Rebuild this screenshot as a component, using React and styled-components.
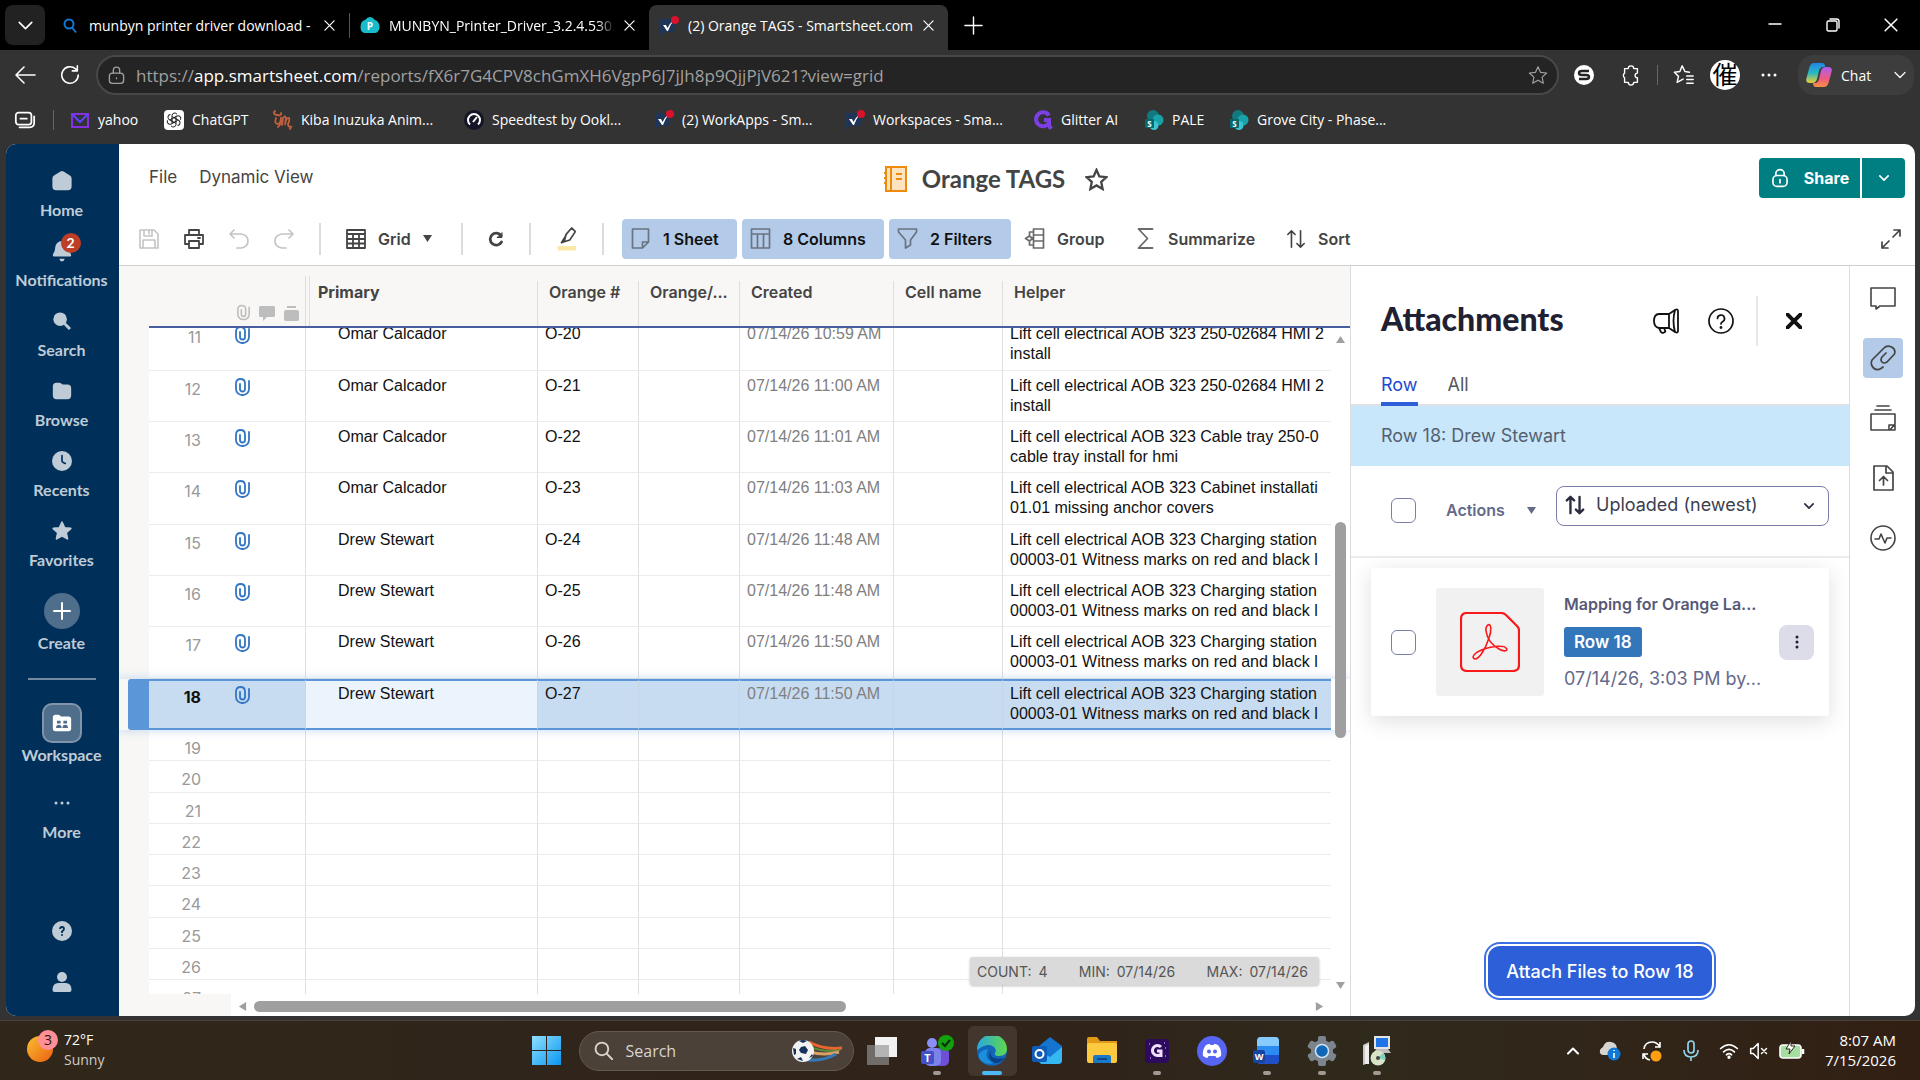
import { useLayoutEffect, useRef } from "react";
import styled, { createGlobalStyle, css } from "styled-components";

const GlobalStyle = createGlobalStyle`
  * {
    box-sizing: border-box;
  }
  body {
    margin: 0;
    background-color: #333333;
    font-family: Inter, "Liberation Sans", sans-serif;
  }
  button {
    border: none;
    padding: 0;
    background: none;
    color: inherit;
    font: inherit;
  }
  a {
    color: inherit;
    text-decoration: none;
  }
  svg {
    display: block;
    flex: none;
  }
`;

const Screen = styled.div`
  height: 100vh;
  display: flex;
  flex-direction: column;
  overflow: hidden;
`;

/* ---------- browser ---------- */

const Browser = styled.header`
  color: #ffffff;
  font-family: "Open Sans", "Noto Sans", sans-serif;
  font-size: 14px;
`;
const TabStrip = styled.div`
  height: 50px;
  padding: 5px 0 0 5px;
  display: flex;
  background-color: #000000;
`;
const TabSearch = styled.button`
  width: 40px;
  height: 40px;
  margin-right: 5px;
  border-radius: 8px;
  background-color: #222222;
  display: flex;
  align-items: center;
  justify-content: center;
`;
const Tab = styled.div`
  width: 299px;
  padding: 0 14px 4px 10px;
  display: flex;
  align-items: center;
  gap: 9px;
  border-radius: 8px 8px 0 0;
  background-color: ${(props) => (props.$active ? "#333333" : "transparent")};
`;
const TabTitle = styled.span`
  flex: 1;
  overflow: hidden;
  white-space: nowrap;
  mask-image: ${(props) => (props.$fade ? "linear-gradient(90deg, #000 92%, transparent)" : "none")};
`;
const TabLine = styled.div`
  width: 1px;
  height: 25px;
  margin-top: 8px;
  background-color: #555555;
`;
const NewTab = styled.button`
  width: 50px;
  height: 40px;
  display: flex;
  align-items: center;
  justify-content: center;
`;
const WindowButtons = styled.div`
  margin-left: auto;
  height: 40px;
  display: flex;

  button {
    width: 58px;
    display: flex;
    align-items: center;
    justify-content: center;
  }
`;
const AddressRow = styled.div`
  height: 50px;
  padding: 0 6px 0 13px;
  display: flex;
  align-items: center;
  gap: 15px;
`;
const AddressBox = styled.div`
  flex: 1;
  height: 40px;
  padding: 0 9px;
  display: flex;
  align-items: center;
  gap: 10px;
  border: 2px solid #484848;
  border-radius: 20px;
  background-color: #242424;
  color: #a0a0a0;
`;
const Address = styled.div`
  flex: 1;
  font-size: 17px;
  white-space: nowrap;

  b {
    font-weight: 400;
    color: #ffffff;
  }
`;
const BarIcons = styled.div`
  display: flex;
  align-items: center;
  gap: ${(props) => props.$gap || 15}px;
`;
const BarLine = styled.div`
  width: 1px;
  height: 20px;
  background-color: #666666;
`;
const ChatButton = styled.button`
  width: 116px;
  height: 40px;
  padding: 0 8px;
  display: flex;
  align-items: center;
  gap: 9px;
  border-radius: 16px;
  background-color: #3d3d3d;

  span {
    flex: 1;
    text-align: left;
  }
`;
const Bookmarks = styled.nav`
  height: 44px;
  padding: 0 0 5px 14px;
  display: flex;
  align-items: center;
  font-size: 14px;
`;
const BookmarkLine = styled(BarLine)`
  margin: 0 16px 0 17px;
`;
const Bookmark = styled.a`
  width: ${(props) => props.$width}px;
  display: flex;
  align-items: center;
  gap: 8px;
  white-space: nowrap;
`;

/* ---------- smartsheet page ---------- */

const Page = styled.div`
  flex: 1;
  min-height: 0;
  margin: 0 5px 4px 6px;
  display: flex;
  border-radius: 10px;
  overflow: hidden;
  background-color: #ffffff;
  color: #444444;
`;
const SideNav = styled.nav`
  width: 113px;
  padding: 22px 2px 19px 0;
  display: flex;
  flex-direction: column;
  align-items: center;
  background-color: #003059;
  color: #bfcbd6;
  font-family: Lato, sans-serif;
  font-size: 16px;
  font-weight: 700;
  line-height: 20px;
`;
const NavItem = styled.button`
  width: 100%;
  height: ${(props) => props.$height || 70}px;
  display: flex;
  flex-direction: column;
  align-items: center;
  gap: ${(props) => props.$gap || 4}px;
`;
const NavIcon = styled.div`
  position: relative;
  width: 30px;
  height: 30px;
  display: flex;
  align-items: center;
  justify-content: center;
`;
const Badge = styled.span`
  position: absolute;
  top: -3px;
  right: -4px;
  width: 20px;
  height: 20px;
  border-radius: 50%;
  background-color: #bd3d26;
  color: #ffffff;
  font-size: 14px;
  text-align: center;
`;
const CreateCircle = styled(NavIcon)`
  width: 36px;
  height: 36px;
  margin-top: 7px;
  border-radius: 50%;
  background-color: #4f6e8b;
`;
const WorkspaceBox = styled(NavIcon)`
  width: 40px;
  height: 40px;
  border: 2px solid #8095ab;
  border-radius: 10px;
  background-color: #4f6e8b;
`;
const NavLine = styled.hr`
  width: 68px;
  height: 2px;
  margin: 18px 0 23px;
  border: none;
  background-color: #738ba2;
`;
const NavBottom = styled.div`
  margin-top: auto;
  display: flex;
  flex-direction: column;
  gap: 21px;
`;
const Main = styled.main`
  flex: 1;
  min-width: 0;
  display: flex;
  flex-direction: column;
`;
const TitleBar = styled.div`
  height: 68px;
  padding: 0 10px 0 30px;
  display: flex;
  align-items: center;
`;
const Menu = styled.div`
  flex: 1;
  padding-bottom: 2px;
  display: flex;
  gap: 22px;
  font-size: 17px;
`;
const SheetTitle = styled.div`
  padding: 2px 62px 0 0;
  display: flex;
  align-items: center;
`;
const SheetName = styled.h1`
  margin: 0 20px 0 15px;
  font-family: Lato, sans-serif;
  font-size: 24px;
  line-height: 30px;
`;
const ShareArea = styled.div`
  flex: 1;
  display: flex;
  justify-content: flex-end;
  gap: 2px;
`;
const ShareButton = styled.button`
  width: ${(props) => (props.$small ? 43 : 101)}px;
  height: 40px;
  display: flex;
  align-items: center;
  justify-content: center;
  gap: 14px;
  border-radius: ${(props) => (props.$small ? "0 4px 4px 0" : "4px 0 0 4px")};
  background-color: #007f83;
  color: #ffffff;
  font-size: 16px;
  font-weight: 700;
`;
const Toolbar = styled.div`
  height: 54px;
  padding: 0 14px 0 18px;
  display: flex;
  align-items: center;
  border-bottom: 1px solid #cfcfcf;
  font-size: 16px;
  font-weight: 600;
`;
const ToolButton = styled.button`
  width: ${(props) => props.$width}px;
  height: 40px;
  padding-left: ${(props) => (props.$wide ? 8 : 0)}px;
  margin-right: ${(props) => (props.$on ? 5 : 0)}px;
  display: flex;
  align-items: center;
  justify-content: ${(props) => (props.$wide ? "flex-start" : "center")};
  gap: 12px;
  border-radius: 4px;
  white-space: nowrap;
  color: ${(props) => (props.$faded ? "#c4c4c4" : "#444444")};
  ${(props) =>
    props.$on &&
    css`
      background-color: #b3cbe9;
      color: #111111;
    `}
`;
const ToolLine = styled.div`
  width: 2px;
  height: 32px;
  margin: 0 ${(props) => props.$after || 2}px 0 2px;
  background-color: #dcdcdc;
`;
const Spacer = styled.div`
  flex: 1;
`;
const Body = styled.div`
  flex: 1;
  min-height: 0;
  display: flex;
`;

/* ---------- grid ---------- */

const GridArea = styled.section`
  position: relative;
  flex: 1;
  min-width: 0;
  display: flex;
  flex-direction: column;
`;
const GridScroll = styled.div`
  flex: 1;
  min-height: 0;
  overflow: hidden;
`;
const Table = styled.table`
  width: 100%;
  table-layout: fixed;
  border-spacing: 0;
  font-family: "Liberation Sans", Arial, sans-serif;
  font-size: 16px;
  line-height: 20px;
  color: #111111;
`;
const Col = styled.col`
  width: ${(props) => props.$width}px;
`;
const Th = styled.th`
  position: sticky;
  top: 0;
  z-index: 2;
  height: 62px;
  padding: 0;
  vertical-align: bottom;
  background-color: #f8f7f5;
  border-bottom: 2px solid ${(props) => (props.$bare ? "#f8f7f5" : "#4a5d9e")};
  font-family: Inter, sans-serif;
  font-weight: 600;
  text-align: left;
  color: #444444;
`;
const HeadCell = styled.div`
  height: 45px;
  padding: 1px 11px;
  border-left: 1px solid #dedede;
  overflow: hidden;
  text-overflow: ellipsis;
  white-space: nowrap;
`;
const PrimaryHead = styled.div`
  height: 50px;
  padding-left: 3px;
  border-left: 1px solid #dedede;
  font-weight: 700;

  div {
    height: 50px;
    padding: 6px 8px;
    border-left: 1px solid #dedede;
  }
`;
const HeadIcons = styled.div`
  height: 50px;
  padding: 0 6px 5px 0;
  display: flex;
  align-items: flex-end;
  justify-content: flex-end;
  gap: 9px;
  color: #bdbdbd;
`;
const Tr = styled.tr`
  height: ${(props) => (props.$empty ? 31 : 51)}px;

  &:nth-child(${(props) => (props.$empty ? "4n + 2" : "3n + 1")}) {
    height: ${(props) => (props.$empty ? 32 : 52)}px;
  }
  ${(props) =>
    props.$selected &&
    css`
      position: relative;
      box-shadow: 0 0 10px rgba(90, 150, 220, 0.35);
    `}
`;
const Td = styled.td`
  padding: ${(props) => props.$top || 5}px 0 0 ${(props) => props.$left || 7}px;
  vertical-align: top;
  overflow: hidden;
  white-space: nowrap;
  border-bottom: 1px solid #ececec;
  border-left: ${(props) => (props.$noLine ? "none" : "1px solid #e0e0e0")};
  color: ${(props) => (props.$gray ? "#808080" : "inherit")};
  ${(props) =>
    props.$selected &&
    css`
      padding-top: ${(props.$top || 5) - 2}px;
      border-top: 2px solid #5a96d8;
      border-bottom: 2px solid #5a96d8;
      border-left-color: #c5d6e6;
      background-color: ${props.$light ? "#ebf3fc" : "#c8dcf1"};
    `}
`;
const RowNumber = styled(Td)`
  padding: 8px 29px 0 0;
  text-align: right;
  font-family: Inter, sans-serif;
  color: #999999;
  ${(props) =>
    props.$selected &&
    css`
      padding-top: 6px;
      font-weight: 700;
      color: #111111;
    `}
`;
const GutterCell = styled.td`
  padding: 0 0 0 9px;
  height: 1px;
  background-color: #f8f7f5;
`;
const RowHandle = styled.div`
  height: 51px;
  border-radius: 3px 0 0 3px;
  background-color: #5a96d8;
`;
const EndCell = styled.td`
  padding: 0;
  background-color: #ffffff;
`;
const ScrollBarY = styled.div`
  position: absolute;
  top: 69px;
  right: 4px;
  bottom: 26px;
  width: 11px;
  display: flex;
  flex-direction: column;
  align-items: center;
`;
const Thumb = styled.div`
  flex: ${(props) => props.$grow};
  align-self: stretch;
  border-radius: 6px;
  background-color: ${(props) => (props.$shown ? "#9f9f9f" : "transparent")};
`;
const Totals = styled.div`
  position: absolute;
  right: 31px;
  bottom: 31px;
  width: 349px;
  height: 28px;
  padding: 0 11px 0 7px;
  display: flex;
  align-items: center;
  justify-content: space-between;
  border-radius: 3px;
  background-color: #dadada;
  box-shadow: 0 1px 3px rgba(0, 0, 0, 0.25);
  font-size: 14px;
  color: #555555;
`;
const Total = styled.div`
  display: flex;
  gap: 7px;
`;
const ScrollBarX = styled.div`
  height: 22px;
  padding: 2px 26px 0 119px;
  display: flex;
  align-items: center;
  background: linear-gradient(90deg, #f8f7f5 112px, #ffffff 112px);
`;
const TrackX = styled.div`
  flex: 1;
  height: 11px;
  margin: 0 8px 0 7px;
  display: flex;
`;

/* ---------- attachments panel ---------- */

const Panel = styled.aside`
  width: 499px;
  display: flex;
  flex-direction: column;
  border-left: 1px solid #dcdcdc;
`;
const PanelHeader = styled.div`
  height: 109px;
  padding: 0 42px 0 30px;
  display: flex;
  align-items: center;
  color: #111111;
`;
const PanelTitle = styled.h2`
  flex: 1;
  margin: 0;
  padding-bottom: 4px;
  font-family: Lato, sans-serif;
  font-size: 32px;
  font-weight: 900;
  color: #1f2133;
`;
const IconButton = styled.button`
  width: ${(props) => props.$width}px;
  display: flex;
  align-items: center;
  justify-content: center;
`;
const PanelLine = styled.div`
  width: 2px;
  height: 50px;
  margin: 0 23px 0 8px;
  background-color: #e8e8e8;
`;
const PanelTabs = styled.div`
  height: 31px;
  padding-left: 30px;
  display: flex;
  gap: 30px;
  border-bottom: 2px solid #dfe1ea;
`;
const PanelTab = styled.button`
  height: 31px;
  padding-bottom: 8px;
  font-size: 18px;
  line-height: 18px;
  color: ${(props) => (props.$active ? "#1d4bcd" : "#54565f")};
  border-bottom: 4px solid ${(props) => (props.$active ? "#2d5fd8" : "transparent")};
`;
const RowBanner = styled.div`
  height: 60px;
  padding: 0 30px 2px;
  display: flex;
  align-items: center;
  background-color: #c8e7fb;
  font-size: 18px;
  color: #54606f;
`;
const ActionsRow = styled.div`
  height: 92px;
  padding: 20px 20px 0 40px;
  display: flex;
  align-items: flex-start;
  border-bottom: 2px solid #ececec;
`;
const CheckBox = styled.input`
  appearance: none;
  width: 25px;
  height: 25px;
  margin: ${(props) => (props.$low ? "12px 0 0" : "0")};
  border: 1px solid #7a7ea8;
  border-radius: 6px;
  background-color: #ffffff;
`;
const ActionsButton = styled.button`
  width: 90px;
  height: 24px;
  margin: 12px 20px 0 30px;
  display: flex;
  align-items: center;
  justify-content: space-between;
  font-size: 16px;
  font-weight: 600;
  color: #646a8a;
`;
const SortLabel = styled.label`
  position: relative;
  flex: 1;
  color: #2a2d40;

  svg {
    position: absolute;
    top: 9px;
    left: 9px;
    pointer-events: none;
  }
  svg:last-child {
    top: 15px;
    left: auto;
    right: 15px;
  }
`;
const SortSelect = styled.select`
  appearance: none;
  width: 100%;
  height: 40px;
  padding: 0 28px 3px 39px;
  border: 1px solid #7a7ea8;
  border-radius: 8px;
  background-color: #ffffff;
  font-family: Inter, sans-serif;
  font-size: 18px;
  color: #3b3e50;
`;
const Card = styled.article`
  height: 148px;
  margin: 10px 20px;
  padding: 20px 15px 20px 20px;
  display: flex;
  align-items: center;
  gap: 20px;
  border-radius: 3px;
  background-color: #ffffff;
  box-shadow: 0 5px 22px rgba(0, 0, 0, 0.13);
`;
const Thumbnail = styled.div`
  width: 108px;
  height: 108px;
  display: flex;
  align-items: center;
  justify-content: center;
  border-radius: 3px;
  background-color: #f1f1f1;
`;
const FileInfo = styled.div`
  flex: 1;
  min-width: 0;
  height: 108px;
  padding-top: 4px;
  display: flex;
  flex-direction: column;
  align-items: flex-start;
  white-space: nowrap;
`;
const FileName = styled.div`
  font-size: 16px;
  font-weight: 600;
  line-height: 24px;
  color: #565a78;
`;
const RowTag = styled.span`
  height: 30px;
  margin: 11px 0 10px;
  padding: 0 10px;
  border-radius: 3px;
  background-color: #3476ba;
  color: #ffffff;
  font-size: 17px;
  font-weight: 600;
  line-height: 30px;
`;
const FileDate = styled.div`
  font-size: 18px;
  line-height: 24px;
  color: #646a8a;
`;
const MoreButton = styled.button`
  width: 35px;
  height: 35px;
  display: flex;
  align-items: center;
  justify-content: center;
  border-radius: 8px;
  background-color: #dcdde9;
  color: #1f2133;
`;
const AttachButton = styled.button`
  align-self: center;
  margin: auto 0 20px;
  padding: 0 18px;
  height: 50px;
  border-radius: 12px;
  background-color: #2d5fd8;
  box-shadow: 0 0 0 2px #ffffff, 0 0 0 4px #3f6fe4;
  color: #ffffff;
  font-size: 18px;
  font-weight: 500;
`;
const Rail = styled.nav`
  width: 66px;
  padding-top: 12px;
  display: flex;
  flex-direction: column;
  align-items: center;
  gap: 20px;
  border-left: 1px solid #dcdcdc;
`;
const RailButton = styled.button`
  width: 40px;
  height: 40px;
  display: flex;
  align-items: center;
  justify-content: center;
  border-radius: 4px;
  background-color: ${(props) => (props.$active ? "#b3cbe9" : "transparent")};
`;

/* ---------- taskbar ---------- */

const Taskbar = styled.footer`
  height: 60px;
  padding: 0 24px 0 27px;
  display: grid;
  grid-template-columns: 1fr auto 1fr;
  align-items: center;
  border-top: 1px solid #4c4138;
  background: linear-gradient(90deg, #30271a, #30231a 55%, #2f2a1c 72%, #321f14);
  color: #ffffff;
  font-family: "Open Sans", "Noto Sans", sans-serif;
  font-size: 14px;
  line-height: 20px;
`;
const Weather = styled.button`
  padding-bottom: 2px;
  display: flex;
  align-items: center;
  gap: 4px;
  text-align: left;

  small {
    display: block;
    font-size: 14px;
    color: #cfcbc7;
  }
`;
const TaskApps = styled.div`
  display: flex;
  align-items: center;
`;
const TaskApp = styled.button`
  position: relative;
  width: 49px;
  height: 50px;
  margin: 0 3px;
  display: flex;
  align-items: center;
  justify-content: center;
  border-radius: 6px;
  background-color: ${(props) => (props.$active ? "rgba(255, 255, 255, 0.09)" : "transparent")};

  &::after {
    content: "";
    position: absolute;
    bottom: 1px;
    width: ${(props) => (props.$active ? 20 : 8)}px;
    height: 4px;
    border-radius: 2px;
    background-color: ${(props) => (props.$active ? "#4cb9f5" : "#a19a94")};
    display: ${(props) => (props.$active || props.$running ? "block" : "none")};
  }
`;
const TaskSearch = styled.button`
  width: 275px;
  height: 40px;
  margin: 0 1px 0 5px;
  padding: 0 10px 0 14px;
  display: flex;
  align-items: center;
  gap: 13px;
  border: 1px solid #64594f;
  border-radius: 20px;
  background-color: #4b4138;
  color: #d8d4d0;
  font-size: 16px;

  span {
    flex: 1;
    text-align: left;
  }
`;
const Tray = styled.div`
  display: flex;
  align-items: center;
  justify-content: flex-end;
  gap: 20px;
`;
const TrayGroup = styled.div`
  display: flex;
  align-items: center;
  gap: ${(props) => props.$gap}px;
`;
const Clock = styled.time`
  padding-bottom: 2px;
  font-size: 15px;
  text-align: right;
`;

/* ---------- icons ---------- */

const Line = ({ size = 20, width, stroke = 2, box = "0 0 24 24", children }) => (
  <svg
    width={width || size}
    height={size}
    viewBox={box}
    fill="none"
    stroke="currentColor"
    strokeWidth={stroke}
    strokeLinecap="round"
    strokeLinejoin="round"
    aria-hidden="true"
  >
    {children}
  </svg>
);
const Solid = ({ size = 20, width, box = "0 0 24 24", children }) => (
  <svg width={width || size} height={size} viewBox={box} fill="currentColor" aria-hidden="true">
    {children}
  </svg>
);

const Chevron = ({ size = 12, stroke = 2 }) => (
  <Line size={size} stroke={stroke} box="0 0 12 12">
    <path d="M1 3.500l5 5 5-5" />
  </Line>
);
const Cross = ({ size = 11, stroke = 1.3 }) => (
  <Line size={size} stroke={stroke} box="0 0 12 12">
    <path d="M1 1l10 10M11 1L1 11" />
  </Line>
);
const arrows = {
  up: "M0 9h10L5 1z",
  down: "M0 1h10L5 9z",
  left: "M9 0v10L1 5z",
  right: "M1 0v10l8-5z",
};
const Caret = ({ dir = "down", size = 9, color = "currentColor" }) => (
  <Solid size={size} box="0 0 10 10">
    <path d={arrows[dir]} fill={color} />
  </Solid>
);
const SmartsheetIcon = () => (
  <svg width="20" height="20" viewBox="0 0 20 20" aria-hidden="true">
    <path d="M1 3h15v11q-1 2-4 2H7q-4 0-6 4z" fill="#1e3558" />
    <path d="M4 9h3l1.500 3Q11 7 15 4q-4 5-6 11H8z" fill="#fff" />
    <circle cx="16" cy="4" r="4" fill="#d8122c" />
  </svg>
);
const SharepointIcon = () => (
  <svg width="20" height="20" viewBox="0 0 20 20" aria-hidden="true">
    <circle cx="9" cy="6" r="6" fill="#12797f" />
    <circle cx="14" cy="10" r="5.500" fill="#1aa2aa" />
    <circle cx="10" cy="15.500" r="4.500" fill="#37c6d0" />
    <rect x="1" y="9" width="9" height="9" rx="1" fill="#05686e" />
    <text x="5.500" y="16.500" fontSize="8" fontWeight="700" fill="#fff" textAnchor="middle">S</text>
  </svg>
);
const Paperclip = ({ color = "#3476c4", size = 18, width = 15 }) => (
  <svg width={width} height={size} viewBox="0 0 15 18" fill="none" stroke={color} strokeWidth="1.800" strokeLinecap="round" aria-hidden="true">
    <path d="M14 3v8a6 6 0 0 1-6.500 6A6 6 0 0 1 1 11V5.500Q1 1 5.500 1T10 5.500V11q0 2.500-2.500 2.500T5 11V6" />
  </svg>
);
const SortArrows = ({ size = 20, stroke = 2 }) => (
  <Line size={size} stroke={stroke} box="0 0 22 22">
    <path d="M6 20V2M2 6l4-4 4 4M16 2v18M12 16l4 4 4-4" />
  </Line>
);
const HelpIcon = ({ size = 26 }) => (
  <Line size={size} stroke={1.7} box="0 0 26 26">
    <circle cx="13" cy="13" r="12" />
    <path d="M9.500 10.500a3.500 3.500 0 1 1 5 3.200Q13 14.500 13 16" />
    <circle cx="13" cy="19.500" r=".6" fill="currentColor" />
  </Line>
);

const bookmarks = [
  {
    title: "yahoo",
    width: 94,
    icon: (
      <svg width="20" height="20" viewBox="0 0 20 20" fill="none" strokeWidth="2">
        <path d="M2 4h16v13H2z" stroke="#8430e0" />
        <path d="M2 4l8 8 8-8" stroke="#5b45ff" />
      </svg>
    ),
  },
  {
    title: "ChatGPT",
    width: 109,
    icon: (
      <svg width="20" height="20" viewBox="0 0 20 20" fill="none" stroke="#222" strokeWidth="1">
        <rect width="20" height="20" rx="4" fill="#fff" stroke="none" />
        {[0, 60, 120, 180, 240, 300].map((a) => (
          <path key={a} transform={`rotate(${a} 10 10)`} d="M8 9V5.500a2.700 2.700 0 0 1 5-1.200M8 6.500l4.500 2.700" />
        ))}
      </svg>
    ),
  },
  {
    title: "Kiba Inuzuka Anim...",
    width: 191,
    icon: (
      <svg width="20" height="20" viewBox="0 0 20 20" fill="none" stroke="#c2603c" strokeWidth="1.800" strokeLinecap="round">
        <path d="M2 1Q-1 4 4 5T8 3M3 8q-2 6 2 6 3-1 3-7 0 8-3 10M9 15l1-7q2-3 3 0l-1 7q1-8 4-7 1 2-1 6 0 3 3 3l-1 2" />
      </svg>
    ),
  },
  {
    title: "Speedtest by Ookl...",
    width: 190,
    icon: (
      <svg width="20" height="20" viewBox="0 0 20 20" fill="none" stroke="#fff" strokeWidth="2">
        <circle cx="10" cy="10" r="10" fill="#141526" stroke="none" />
        <path d="M6 14.500a6 6 0 1 1 8 0M9 12l4-5" />
      </svg>
    ),
  },
  { title: "(2) WorkApps - Sm...", width: 191, icon: <SmartsheetIcon /> },
  { title: "Workspaces - Sma...", width: 188, icon: <SmartsheetIcon /> },
  {
    title: "Glitter AI",
    width: 111,
    icon: (
      <svg width="20" height="20" viewBox="0 0 20 20" fill="none" stroke="#7b3fe4" strokeWidth="4">
        <path d="M16 5.500A7 7 0 1 0 16 13V10h-5M16 9v6l2 4" />
      </svg>
    ),
  },
  { title: "PALE", width: 85, icon: <SharepointIcon /> },
  { title: "Grove City - Phase...", width: 180, icon: <SharepointIcon /> },
];

const navItems = [
  {
    label: "Home",
    icon: (
      <Solid size={22}>
        <path d="M10.300 1.600a3 3 0 0 1 3.400 0l7 4.500A4 4 0 0 1 22.500 9.500V18a4 4 0 0 1-4 4h-13a4 4 0 0 1-4-4V9.500a4 4 0 0 1 1.800-3.400z" />
      </Solid>
    ),
  },
  {
    label: "Notifications",
    badge: 2,
    icon: (
      <Solid size={22}>
        <path d="M12 1a7.500 7.500 0 0 1 7.500 7.500c0 5 2.500 6 2.500 8 0 1-.6 1.500-1.500 1.500h-17C2.600 18 2 17.500 2 16.500c0-2 2.500-3 2.500-8A7.500 7.500 0 0 1 12 1zM9 20.500h6q-1 3-3 3t-3-3z" />
      </Solid>
    ),
  },
  {
    label: "Search",
    icon: (
      <Solid size={18}>
        <circle cx="9.500" cy="9.500" r="9" />
        <path d="M14 16l2-2 7.500 7.200-2.300 2.300z" stroke="currentColor" strokeWidth="1" />
      </Solid>
    ),
  },
  {
    label: "Browse",
    icon: (
      <Solid size={22}>
        <path d="M2 7a4 4 0 0 1 4-4h3q1.500 0 2.500 1t2.500 1h4a4 4 0 0 1 4 4v8a4 4 0 0 1-4 4H6a4 4 0 0 1-4-4z" />
      </Solid>
    ),
  },
  {
    label: "Recents",
    icon: (
      <Solid size={20}>
        <circle cx="12" cy="12" r="12" />
        <path d="M12 5.500V12q0 1.500 4 3" fill="none" stroke="#003059" strokeWidth="2" strokeLinecap="round" />
      </Solid>
    ),
  },
  {
    label: "Favorites",
    icon: (
      <Solid size={22}>
        <path
          d="M12 2.500l2.800 6 6.700.8-5 4.500 1.400 6.700L12 17.200l-5.900 3.300 1.400-6.700-5-4.500 6.700-.8z"
          stroke="currentColor"
          strokeWidth="2"
          strokeLinejoin="round"
        />
      </Solid>
    ),
  },
];

const charging = ["Lift cell electrical AOB 323 Charging station", "00003-01 Witness marks on red and black l"];
const hmi = ["Lift cell electrical AOB 323 250-02684 HMI 2", "install"];
const cable = ["Lift cell electrical AOB 323 Cable tray 250-0", "cable tray install for hmi"];
const cabinet = ["Lift cell electrical AOB 323 Cabinet installati", "01.01 missing anchor covers"];

const rows = [
  { n: 11, name: "Omar Calcador", tag: "O-20", time: "10:59 AM", helper: hmi },
  { n: 12, name: "Omar Calcador", tag: "O-21", time: "11:00 AM", helper: hmi },
  { n: 13, name: "Omar Calcador", tag: "O-22", time: "11:01 AM", helper: cable },
  { n: 14, name: "Omar Calcador", tag: "O-23", time: "11:03 AM", helper: cabinet },
  { n: 15, name: "Drew Stewart", tag: "O-24", time: "11:48 AM", helper: charging },
  { n: 16, name: "Drew Stewart", tag: "O-25", time: "11:48 AM", helper: charging },
  { n: 17, name: "Drew Stewart", tag: "O-26", time: "11:50 AM", helper: charging },
  { n: 18, name: "Drew Stewart", tag: "O-27", time: "11:50 AM", helper: charging, selected: true },
];
const emptyRows = [19, 20, 21, 22, 23, 24, 25, 26, 27];
const totals = [
  ["COUNT:", "4"],
  ["MIN:", "07/14/26"],
  ["MAX:", "07/14/26"],
];

const Grid = () => {
  const scroller = useRef(null);

  useLayoutEffect(() => {
    scroller.current.scrollTop = 9;
  }, []);

  return (
    <GridArea>
      <GridScroll ref={scroller}>
        <Table>
          <colgroup>
            <Col $width={30} />
            <Col $width={81} />
            <Col $width={75} />
            <Col $width={232} />
            <Col $width={101} />
            <Col $width={101} />
            <Col $width={154} />
            <Col $width={109} />
            <col />
            <Col $width={19} />
          </colgroup>
          <thead>
            <tr>
              <Th $bare />
              <Th />
              <Th>
                <HeadIcons>
                  <Paperclip color="#bdbdbd" size={17} width={13} />
                  <Solid size={15} width={16} box="0 0 16 15">
                    <path d="M1.500 0h13A1.500 1.500 0 0 1 16 1.500v8a1.500 1.500 0 0 1-1.500 1.500H8l-4 4v-4H1.500A1.500 1.500 0 0 1 0 9.500v-8A1.500 1.500 0 0 1 1.500 0z" />
                  </Solid>
                  <Solid size={15} box="0 0 15 15">
                    <path d="M3 0h9v2H3zM2 4h11a2 2 0 0 1 2 2v7a2 2 0 0 1-2 2H2a2 2 0 0 1-2-2V6a2 2 0 0 1 2-2z" />
                  </Solid>
                </HeadIcons>
              </Th>
              <Th>
                <PrimaryHead>
                  <div>Primary</div>
                </PrimaryHead>
              </Th>
              {["Orange #", "Orange/...", "Created", "Cell name", "Helper"].map((name) => (
                <Th key={name}>
                  <HeadCell>{name}</HeadCell>
                </Th>
              ))}
              <Th />
            </tr>
          </thead>
          <tbody>
            {rows.map((row) => (
              <Tr key={row.n} $selected={row.selected}>
                <GutterCell>{row.selected && <RowHandle />}</GutterCell>
                <RowNumber $noLine $selected={row.selected}>
                  {row.n}
                </RowNumber>
                <Td $noLine $left={5} $top={7} $selected={row.selected}>
                  <Paperclip />
                </Td>
                <Td $left={32} $selected={row.selected} $light>
                  {row.name}
                </Td>
                <Td $selected={row.selected}>{row.tag}</Td>
                <Td $selected={row.selected} />
                <Td $selected={row.selected} $gray>
                  07/14/26 {row.time}
                </Td>
                <Td $selected={row.selected} />
                <Td $selected={row.selected}>
                  {row.helper[0]}
                  <br />
                  {row.helper[1]}
                </Td>
                <EndCell />
              </Tr>
            ))}
            {emptyRows.map((n) => (
              <Tr key={n} $empty>
                <GutterCell />
                <RowNumber $noLine>{n}</RowNumber>
                <Td $noLine />
                <Td />
                <Td />
                <Td />
                <Td />
                <Td />
                <Td />
                <EndCell />
              </Tr>
            ))}
          </tbody>
        </Table>
      </GridScroll>
      <ScrollBarX>
        <Caret dir="left" color="#9f9f9f" />
        <TrackX>
          <Thumb $grow={594} $shown />
          <Thumb $grow={462} />
        </TrackX>
        <Caret dir="right" color="#9f9f9f" />
      </ScrollBarX>
      <ScrollBarY>
        <Caret dir="up" color="#9f9f9f" />
        <Thumb $grow={178} />
        <Thumb $grow={215} $shown />
        <Thumb $grow={243} />
        <Caret dir="down" color="#9f9f9f" />
      </ScrollBarY>
      <Totals>
        {totals.map(([label, value]) => (
          <Total key={label}>
            <span>{label}</span>
            <span>{value}</span>
          </Total>
        ))}
      </Totals>
    </GridArea>
  );
};

const Attachments = () => {
  return (
    <Panel>
      <PanelHeader>
        <PanelTitle>Attachments</PanelTitle>
        <IconButton $width={55} aria-label="Announcements">
          <Line size={26} stroke={1.8} box="0 0 26 26">
            <path d="M16 6l6-4q3-1.500 3 1v20q0 2.500-3 1l-6-4zM16 6H6Q1 6 1 13q0 6 5 7h10M6 20l2 4q1 1.500 3 .5t1-2l-1-2.500M22 2q-3 11 0 22" />
          </Line>
        </IconButton>
        <IconButton $width={55} aria-label="Help">
          <HelpIcon />
        </IconButton>
        <PanelLine />
        <IconButton $width={26} aria-label="Close">
          <Cross size={16} stroke={3} />
        </IconButton>
      </PanelHeader>
      <PanelTabs>
        <PanelTab $active>Row</PanelTab>
        <PanelTab>All</PanelTab>
      </PanelTabs>
      <RowBanner>Row 18: Drew Stewart</RowBanner>
      <ActionsRow>
        <CheckBox type="checkbox" aria-label="Select all" $low />
        <ActionsButton>
          Actions
          <Caret />
        </ActionsButton>
        <SortLabel>
          <SortArrows stroke={2.6} />
          <SortSelect aria-label="Sort attachments">
            <option>Uploaded (newest)</option>
          </SortSelect>
          <Chevron size={10} />
        </SortLabel>
      </ActionsRow>
      <Card>
        <CheckBox type="checkbox" aria-label="Select file" />
        <Thumbnail>
          <svg width="60" height="60" viewBox="0 0 60 60" fill="none" stroke="#f8191b" aria-hidden="true">
            <path d="M7 1h34q3 0 5 2l11 11q2 2 2 4v35q0 6-6 6H7q-6 0-6-6V7q0-6 6-6z" strokeWidth="2.200" />
            <path
              d="M28 13c3-2 4 5 1 13-4 12-10 21-14 21-4-1-2-6 9-10 8-3 20-4 22-1 3 3-2 4-7 1-7-4-12-11-13-18-.5-4 .5-5 2-6z"
              strokeWidth="1.600"
            />
          </svg>
        </Thumbnail>
        <FileInfo>
          <FileName>Mapping for Orange La...</FileName>
          <RowTag>Row 18</RowTag>
          <FileDate>07/14/26, 3:03 PM by...</FileDate>
        </FileInfo>
        <MoreButton aria-label="File menu">
          <Solid size={14} box="0 0 14 14">
            <circle cx="7" cy="2" r="1.500" />
            <circle cx="7" cy="7" r="1.500" />
            <circle cx="7" cy="12" r="1.500" />
          </Solid>
        </MoreButton>
      </Card>
      <AttachButton>Attach Files to Row 18</AttachButton>
    </Panel>
  );
};

const SmartsheetRail = () => (
  <Rail>
    <RailButton aria-label="Comments">
      <Line size={26} stroke={1.6} box="0 0 26 26">
        <path d="M1 3h24v18H10l-4 3v-3H1z" />
      </Line>
    </RailButton>
    <RailButton $active aria-label="Attachments">
      <Line size={26} stroke={1.7} box="0 0 26 26">
        <path d="M13 22l-2 1.500Q7 26 3.500 23T2 15L14 3q3-3 7.500-1t3 7L17 17q-3 2-5 0t0-5l4-4" />
      </Line>
    </RailButton>
    <RailButton aria-label="Proofs">
      <Line size={26} stroke={1.6} box="0 0 26 26">
        <path d="M7 1h12M5 5h16M1 9h24v10l-5 6H1zM19 25v-5h6v5h-6" />
      </Line>
    </RailButton>
    <RailButton aria-label="Publish">
      <Line size={26} stroke={1.7} box="0 0 26 26">
        <path d="M4 1h13l6 6v18H4zM16 1v7h7M13.500 20v-8M9.500 15.500l4-4 4 4" />
      </Line>
    </RailButton>
    <RailButton aria-label="Activity">
      <Line size={26} stroke={1.6} box="0 0 26 26">
        <circle cx="13" cy="13" r="12" />
        <path d="M5 14h4l2-5 4 9 2-5h4" />
      </Line>
    </RailButton>
  </Rail>
);

const EdgeChrome = () => (
  <Browser>
    <TabStrip>
      <TabSearch aria-label="Search tabs">
        <Chevron size={15} stroke={1.3} />
      </TabSearch>
      <Tab>
        <svg width="20" height="20" viewBox="0 0 20 20" fill="none" stroke="#0f78d4" strokeWidth="2">
          <circle cx="9" cy="8" r="4.500" />
          <path d="M12 11.500l4 5" />
        </svg>
        <TabTitle>munbyn printer driver download -</TabTitle>
        <Cross />
      </Tab>
      <TabLine />
      <Tab>
        <svg width="20" height="20" viewBox="0 0 20 20">
          <path d="M5 4q5-6 10 0 5 2 4.500 8-1 5-5 5h-9q-5 0-5-6T5 4z" fill="#19bccb" />
          <text x="10" y="14" fontSize="10" fontWeight="700" fill="#fff" textAnchor="middle">P</text>
        </svg>
        <TabTitle $fade>MUNBYN_Printer_Driver_3.2.4.530.e</TabTitle>
        <Cross />
      </Tab>
      <Tab $active>
        <SmartsheetIcon />
        <TabTitle>(2) Orange TAGS - Smartsheet.com</TabTitle>
        <Cross />
      </Tab>
      <NewTab aria-label="New tab">
        <Line size={19} stroke={1.5} box="0 0 20 20">
          <path d="M10 1v18M1 10h18" />
        </Line>
      </NewTab>
      <WindowButtons>
        <button aria-label="Minimize">
          <Line size={14} stroke={1.4} box="0 0 14 14">
            <path d="M1 6h12" />
          </Line>
        </button>
        <button aria-label="Restore">
          <Line size={14} stroke={1.4} box="0 0 14 14">
            <path d="M1 4.500Q1 3 2.500 3h7Q11 3 11 4.500v7Q11 13 9.500 13h-7Q1 13 1 11.500zM4 1h6.500Q13 1 13 3.500V10" />
          </Line>
        </button>
        <button aria-label="Close window">
          <Cross size={14} />
        </button>
      </WindowButtons>
    </TabStrip>
    <AddressRow>
      <BarIcons $gap={22}>
        <Line size={24} stroke={1.6}>
          <path d="M22 12H3M11 4l-8 8 8 8" />
        </Line>
        <Line size={22} stroke={1.7}>
          <path d="M21 12a9 9 0 1 1-3-6.700L20 7M20 2v5.500h-5.500" />
        </Line>
      </BarIcons>
      <AddressBox>
        <Line size={19} stroke={1.7}>
          <rect x="3" y="9" width="18" height="13" rx="4" />
          <path d="M8 9V5.500a4 4 0 0 1 8 0V9M12 15v1" />
        </Line>
        <Address>
          https://<b>app.smartsheet.com</b>/reports/fX6r7G4CPV8chGmXH6VgpP6J7jJh8p9QjjPjV621?view=grid
        </Address>
        <Line size={20} stroke={1.4}>
          <path d="M12 2l3 6.800 7.400.8-5.500 5 1.500 7.300L12 18.200l-6.400 3.700 1.500-7.300-5.500-5 7.400-.8z" />
        </Line>
      </AddressBox>
      <BarIcons>
        <BarIcons $gap={26}>
          <svg width="20" height="20" viewBox="0 0 20 20">
            <circle cx="10" cy="10" r="10" fill="#fff" />
            <path d="M15 6H8Q5 6 5 8t3 2h4q3 0 3 2t-3 2H5" fill="none" stroke="#222" strokeWidth="2.400" />
          </svg>
          <Line size={22} stroke={1.5}>
            <path d="M9 5a3 3 0 0 1 6 0h4v5a2.500 2.500 0 0 0 0 5v5h-4a3 3 0 0 1-6 0H5v-5a3 3 0 0 1 0-5V5z" />
          </Line>
        </BarIcons>
        <BarLine />
        <Line size={22} stroke={1.6}>
          <path d="M11 16.500L4.500 20l1.500-6.500-4.500-4.500 6-.8L10 2l3 6.200 5 .8M15 13h7M15 17h7M15 21h7" />
        </Line>
        <svg width="30" height="30" viewBox="0 0 30 30">
          <circle cx="15" cy="15" r="15" fill="#fff" />
          <text x="15" y="24" fontSize="25" fontWeight="400" textAnchor="middle" fontFamily="Noto Sans CJK JP">催</text>
        </svg>
        <Solid size={18} width={28} box="-5 0 28 18">
          <circle cx="3" cy="9" r="1.500" />
          <circle cx="9" cy="9" r="1.500" />
          <circle cx="15" cy="9" r="1.500" />
        </Solid>
        <ChatButton>
          <svg width="26" height="26" viewBox="0 0 26 26">
            <defs>
              <linearGradient id="copilotA" x1="0" y1="0" x2="0" y2="1">
                <stop offset="0" stopColor="#2186e8" />
                <stop offset=".5" stopColor="#27b8c0" />
                <stop offset="1" stopColor="#f0cf2c" />
              </linearGradient>
              <linearGradient id="copilotB" x1="0" y1="0" x2="0" y2="1">
                <stop offset="0" stopColor="#b05cf0" />
                <stop offset=".6" stopColor="#f05a80" />
                <stop offset="1" stopColor="#fb9240" />
              </linearGradient>
            </defs>
            <path d="M8 1h8q3 0 3 4h-2q-3 0-4 4l-2 8q-1 4-5 4H4q-5 0-3.500-5l3-11Q5 1 8 1z" fill="url(#copilotA)" />
            <path d="M18 25h-8q-3 0-3-4h2q3 0 4-4l2-8q1-4 5-4h2q5 0 3.500 5l-3 11Q21 25 18 25z" fill="url(#copilotB)" />
          </svg>
          <span>Chat</span>
          <Chevron size={12} stroke={1.2} />
        </ChatButton>
      </BarIcons>
    </AddressRow>
    <Bookmarks>
      <Line size={22} stroke={1.9}>
        <rect x="2" y="4" width="17" height="13" rx="3" />
        <path d="M6 20h11q5 0 5-5V8M7 10.500h7" />
      </Line>
      <BookmarkLine />
      {bookmarks.map((item) => (
        <Bookmark key={item.title} href="#" $width={item.width}>
          {item.icon}
          {item.title}
        </Bookmark>
      ))}
    </Bookmarks>
  </Browser>
);

const WindowsTaskbar = () => (
  <Taskbar>
    <Weather>
      <svg width="33" height="40" viewBox="0 0 33 40">
        <defs>
          <linearGradient id="sun" x1="0" y1="0" x2="1" y2="1">
            <stop offset="0" stopColor="#f8c030" />
            <stop offset="1" stopColor="#ec5f12" />
          </linearGradient>
        </defs>
        <circle cx="13" cy="19" r="13" fill="url(#sun)" />
        <circle cx="21" cy="10" r="10" fill="#ff8f96" />
        <text x="21" y="15" fontSize="14" textAnchor="middle" fill="#26190f">3</text>
      </svg>
      <span>
        72°F
        <small>Sunny</small>
      </span>
    </Weather>
    <TaskApps>
      <TaskApp aria-label="Start">
        <svg width="29" height="29" viewBox="0 0 29 29">
          <defs>
            <linearGradient id="win" x1="0" y1="0" x2="1" y2="1">
              <stop offset="0" stopColor="#8fe0ff" />
              <stop offset="1" stopColor="#0a95f0" />
            </linearGradient>
          </defs>
          <path d="M0 0h14v14H0zM15 0h14v14H15zM0 15h14v14H0zM15 15h14v14H15z" fill="url(#win)" />
        </svg>
      </TaskApp>
      <TaskSearch>
        <Line size={19} stroke={2.4}>
          <circle cx="10" cy="10" r="8" />
          <path d="M16 16l7 7" />
        </Line>
        <span>Search</span>
        <svg width="51" height="24" viewBox="0 0 51 24" fill="none" strokeWidth="3">
          <path d="M17 3q14 8 33 6" stroke="#e8662d" />
          <path d="M18 8q16 6 30 3" stroke="#5a8a3a" strokeWidth="2" />
          <path d="M18 13q14 4 29 0" stroke="#d9a066" />
          <path d="M16 21q16 1 28-6" stroke="#3578b8" />
          <circle cx="11" cy="12" r="11" fill="#f2f2f2" />
          <path d="M9 8l4-1 3 4-2 4-5-1-2-3zM1 9l3 1v5l-2 1zM7 2q4-2 8 0l-4 2zM5 20l4-2 2 4zM17 19l3-4 1 2z" fill="#17305c" />
        </svg>
      </TaskSearch>
      <TaskApp aria-label="Task view">
        <svg width="30" height="28" viewBox="0 0 30 28">
          <rect y="8" width="22" height="20" fill="#6f6c6a" />
          <rect x="8" width="22" height="20" fill="#f2f2f2" />
          <path d="M8 8h14v12H8z" fill="#b4b4b4" />
        </svg>
      </TaskApp>
      <TaskApp $running aria-label="Teams">
        <svg width="34" height="34" viewBox="0 0 34 34">
          <circle cx="12" cy="9" r="5" fill="#8a8ff5" />
          <rect x="15" y="14" width="14" height="18" rx="5" fill="#6f4fd8" />
          <rect x="5" y="14" width="16" height="18" rx="5" fill="#7b83eb" />
          <rect x="1" y="17" width="13" height="13" rx="2" fill="#4350c8" />
          <text x="7.500" y="28" fontSize="11" fontWeight="700" fill="#fff" textAnchor="middle">T</text>
          <circle cx="26" cy="9" r="8" fill="#13a10e" />
          <path d="M22 9l3 3 5-6" fill="none" stroke="#0b2a0b" strokeWidth="2" />
        </svg>
      </TaskApp>
      <TaskApp $active aria-label="Edge">
        <svg width="30" height="30" viewBox="0 0 30 30">
          <defs>
            <linearGradient id="edge" x1="0" y1="0" x2="1" y2="0">
              <stop offset="0" stopColor="#2aa8e0" />
              <stop offset="1" stopColor="#5fd84a" />
            </linearGradient>
          </defs>
          <circle cx="15" cy="15" r="15" fill="#1166b8" />
          <path d="M0 14A15 15 0 0 1 30 13q0 7-8 7-5 0-4-3 2-3-1-6-6-5-17 3z" fill="url(#edge)" />
          <path d="M11 13q-5 10 6 14-10 3-15-5-2-7 9-9z" fill="#1b8fdc" />
          <path d="M14 14q-3 11 14 8-4 5-10 5-9-4-4-13z" fill="#0b3f88" />
        </svg>
      </TaskApp>
      <TaskApp aria-label="Outlook">
        <svg width="30" height="28" viewBox="0 0 30 28">
          <path d="M7 9L18 0l12 9v14q0 4-4 4H11q-4 0-4-4z" fill="#1474d0" />
          <path d="M7 14l11 6 12-10v13q0 4-4 4H11q-4 0-4-4z" fill="#35b8f1" />
          <rect y="9" width="15" height="16" rx="2" fill="#0f5db8" />
          <circle cx="7.500" cy="17" r="4" fill="none" stroke="#fff" strokeWidth="2" />
        </svg>
      </TaskApp>
      <TaskApp aria-label="File Explorer">
        <svg width="30" height="27" viewBox="0 0 30 27">
          <path d="M0 2q0-2 2-2h8l3 4h17v8H0z" fill="#e09a15" />
          <rect y="6" width="30" height="20" rx="2" fill="#fcc93f" />
          <path d="M6 20q0-2 2-2h14q2 0 2 2v6H6z" fill="#1a78c8" />
          <path d="M10 22h10" stroke="#0b4a88" strokeWidth="2" />
        </svg>
      </TaskApp>
      <TaskApp $running aria-label="Glitter AI">
        <svg width="24" height="24" viewBox="0 0 24 24">
          <rect width="24" height="24" rx="4" fill="#2c0a5c" />
          <path d="M16 8a5 5 0 1 0 0 7v-3h-4M16 13v5" fill="none" stroke="#f0e0ff" strokeWidth="3" />
          <path d="M4 5h1M19 4h1M5 19h1M20 17h1M20 9h1" stroke="#c080ff" strokeWidth="1.500" />
        </svg>
      </TaskApp>
      <TaskApp aria-label="Discord">
        <svg width="30" height="30" viewBox="0 0 30 30">
          <circle cx="15" cy="15" r="15" fill="#5865f2" />
          <path d="M9 9q3-1.500 4-1l.5 1h3l.5-1q1-.5 4 1 4 5 3 11-3 2-4.500 2l-1-2h-7l-1 2Q9 22 6 20 5 14 9 9z" fill="#fff" />
          <circle cx="12" cy="15.500" r="2" fill="#5865f2" />
          <circle cx="18" cy="15.500" r="2" fill="#5865f2" />
        </svg>
      </TaskApp>
      <TaskApp $running aria-label="Word">
        <svg width="28" height="28" viewBox="0 0 28 28">
          <rect x="4" width="22" height="27" rx="4" fill="#2a8cf0" />
          <path d="M4 9V4q0-4 4-4h14q4 0 4 4v5z" fill="#86cbfb" />
          <path d="M4 18h22v5q0 4-4 4H8q-4 0-4-4z" fill="#1f4ec8" />
          <rect y="13" width="12" height="13" rx="2" fill="#17449e" />
          <text x="6" y="23" fontSize="9" fontWeight="700" fill="#fff" textAnchor="middle">W</text>
        </svg>
      </TaskApp>
      <TaskApp $running aria-label="Settings">
        <svg width="30" height="30" viewBox="0 0 30 30">
          {[0, 60, 120].map((a) => (
            <rect key={a} x="11" y="0" width="8" height="30" rx="2" fill="#7c858d" transform={`rotate(${a} 15 15)`} />
          ))}
          <circle cx="15" cy="15" r="11" fill="#7c858d" />
          <circle cx="15" cy="15" r="6.500" fill="#0f67b5" stroke="#cfe3f2" strokeWidth="1.500" />
        </svg>
      </TaskApp>
      <TaskApp $running aria-label="Installer">
        <svg width="30" height="30" viewBox="0 0 30 30">
          <path d="M1 9l6-3v21l-6 2z" fill="#c9c9c9" />
          <path d="M3 10l4-2v20H3z" fill="#efefef" />
          <rect x="12" width="16" height="13" fill="#e4e4e4" />
          <rect x="14" y="2" width="12" height="9" fill="#1f74e8" />
          <path d="M14 13h12l3 4H12z" fill="#bdbdbd" />
          <circle cx="16" cy="22" r="7.500" fill="#d8e4c8" />
          <path d="M16 22l5-5q3 3 2 7z" fill="#7fd0c0" />
          <circle cx="16" cy="22" r="2" fill="#444" />
        </svg>
      </TaskApp>
    </TaskApps>
    <Tray>
      <TrayGroup $gap={20}>
        <Line size={12} stroke={2} box="0 0 12 12">
          <path d="M1 8.500l5-5 5 5" />
        </Line>
        <svg width="22" height="20" viewBox="0 0 22 20">
          <path d="M1 12q-1-4 3-6 2-6 8-5 6 1 6 7v6H4q-2 0-3-2z" fill="#d8d4d0" />
          <circle cx="15" cy="13" r="6.500" fill="#1079d8" />
          <path d="M15 12v5M15 9v1" stroke="#fff" strokeWidth="1.600" />
        </svg>
        <svg width="22" height="22" viewBox="0 0 22 22" fill="none" stroke="#fff" strokeWidth="1.600">
          <path d="M3 9Q4 2 11 2q5 0 8 5M19 2v5h-5M9 20q-5-1-6-6M2 19v-5h5" />
          <circle cx="15" cy="16" r="5.500" fill="#ff9f0f" stroke="none" />
        </svg>
        <svg width="16" height="22" viewBox="0 0 16 22" fill="none" stroke="#8fd4e8" strokeWidth="1.700">
          <rect x="5" y="1" width="6" height="12" rx="3" />
          <path d="M1 10q0 7 7 7t7-7M8 17v4" />
        </svg>
      </TrayGroup>
      <TrayGroup $gap={10}>
        <Line size={20} stroke={2}>
          <path d="M2 9q10-9 20 0M5.500 13q6.500-6 13 0M9 16.500q3-2.500 6 0" />
          <circle cx="12" cy="19.500" r="1" fill="currentColor" />
        </Line>
        <Line size={20} stroke={1.8}>
          <path d="M2 9h3l6-6v18l-6-6H2zM15 9l6 6M21 9l-6 6" />
        </Line>
        <svg width="26" height="20" viewBox="0 0 26 20">
          <rect x="1" y="4" width="21" height="13" rx="3" fill="#a6dda0" stroke="#fff" strokeWidth="1.600" />
          <path d="M24 8v5" stroke="#fff" strokeWidth="2.500" />
          <path d="M12 0L7 8h4l-1 5 6-8h-4z" fill="#fff" stroke="#30251b" />
        </svg>
      </TrayGroup>
      <Clock>
        8:07 AM
        <br />
        7/15/2026
      </Clock>
    </Tray>
  </Taskbar>
);

const App = () => {
  return (
    <Screen>
      <GlobalStyle />
      <EdgeChrome />
      <Page>
        <SideNav>
          {navItems.map((item) => (
            <NavItem key={item.label}>
              <NavIcon>
                {item.icon}
                {item.badge && <Badge>{item.badge}</Badge>}
              </NavIcon>
              {item.label}
            </NavItem>
          ))}
          <NavItem $height={74}>
            <CreateCircle>
              <Line size={18} stroke={2} box="0 0 18 18">
                <path d="M9 1v16M1 9h16" stroke="#fff" />
              </Line>
            </CreateCircle>
            Create
          </NavItem>
          <NavLine />
          <NavItem $height={85} $gap={2}>
            <WorkspaceBox>
              <Solid size={22}>
                <path d="M2 6a3 3 0 0 1 3-3h3q1 0 2 1t2 1h7a3 3 0 0 1 3 3v10a3 3 0 0 1-3 3H5a3 3 0 0 1-3-3z" fill="#fff" />
                <path d="M5.500 17.500q0-3.500 3-3.500t3 3.500zM12.500 17.500q0-3.500 3-3.500t3 3.500zM6.500 9.500h4v3h-4zM13.500 9.500h4v3h-4z" fill="#4f6e8b" />
              </Solid>
            </WorkspaceBox>
            Workspace
          </NavItem>
          <NavItem>
            <NavIcon>
              <Solid size={16} box="0 0 16 16">
                <circle cx="2" cy="8" r="1.500" />
                <circle cx="8" cy="8" r="1.500" />
                <circle cx="14" cy="8" r="1.500" />
              </Solid>
            </NavIcon>
            More
          </NavItem>
          <NavBottom>
            <NavIcon as="button" aria-label="Help">
              <Solid size={20} box="0 0 20 20">
                <circle cx="10" cy="10" r="10" />
                <path d="M8 8q0-2 2-2t2 2q0 1-2 2.500V12" fill="none" stroke="#003059" strokeWidth="1.800" />
                <circle cx="10" cy="14" r="1" fill="#003059" />
              </Solid>
            </NavIcon>
            <NavIcon as="button" aria-label="Account">
              <Solid size={20} box="0 0 20 20">
                <circle cx="10" cy="5" r="5" />
                <path d="M.5 18q0-7 6-7h7q6 0 6 7 0 2-2 2h-15q-2 0-2-2z" />
              </Solid>
            </NavIcon>
          </NavBottom>
        </SideNav>
        <Main>
          <TitleBar>
            <Menu>
              <button>File</button>
              <button>Dynamic View</button>
            </Menu>
            <SheetTitle>
              <svg width="23" height="26" viewBox="0 0 23 26" fill="#fde3bf" stroke="#ee8a0c" strokeWidth="2" aria-hidden="true">
                <path d="M2 1h20v24H2zM7 1v24M12 8h6M12 13h6M0 7h3M0 12h3M0 17h3" />
              </svg>
              <SheetName>Orange TAGS</SheetName>
              <Line size={23} stroke={2.4}>
                <path d="M12 2l3 6.800 7.400.8-5.500 5 1.500 7.300L12 18.200l-6.400 3.700 1.500-7.300-5.500-5 7.400-.8z" strokeLinejoin="miter" />
              </Line>
            </SheetTitle>
            <ShareArea>
              <ShareButton>
                <Line size={20} stroke={2}>
                  <rect x="3.500" y="9" width="17" height="13" rx="5" />
                  <path d="M7 9V7a5 5 0 0 1 10 0v2M12 14v4" />
                </Line>
                Share
              </ShareButton>
              <ShareButton $small aria-label="Share options">
                <Chevron size={10} />
              </ShareButton>
            </ShareArea>
          </TitleBar>
          <Toolbar>
            <ToolButton $faded $width={24} aria-label="Save">
              <Line size={20} stroke={1.6} box="0 0 20 20">
                <path d="M1 1h14l4 4v14H1zM5 1v6h8V1M10 2v3M4 19v-8h12v8" />
              </Line>
            </ToolButton>
            <ToolButton $width={66} aria-label="Print">
              <Line size={20} stroke={1.8} box="0 0 20 20">
                <path d="M5 6V1h10v5M5 15H1V6h18v9h-4M5 12h10v7H5zM14 9h2" />
              </Line>
            </ToolButton>
            <ToolButton $faded $width={24} aria-label="Undo">
              <Line size={20} stroke={1.7} box="0 0 20 20">
                <path d="M5 1L1 5l4 4M1 5h11q7 1 7 7t-7 7H8" />
              </Line>
            </ToolButton>
            <ToolButton $faded $width={66} aria-label="Redo">
              <Line size={20} stroke={1.7} box="0 0 20 20">
                <path d="M15 1l4 4-4 4M19 5H8q-7 1-7 7t7 7h4" />
              </Line>
            </ToolButton>
            <ToolLine $after={17} />
            <ToolButton $wide $width={121}>
              <Line size={20} stroke={1.8} box="0 0 20 20">
                <path d="M1 1h18v18H1zM1 5h18M1 10h18M1 14.500h18M7 5v14M13 5v14" />
              </Line>
              Grid
              <Caret />
            </ToolButton>
            <ToolLine />
            <ToolButton $width={62} aria-label="Refresh">
              <Line size={16} stroke={2.8} box="0 0 16 16">
                <path d="M13.500 11a6 6 0 1 1-.5-6.500" />
                <path d="M14 2v4.500H9.500z" fill="currentColor" strokeWidth="1" />
              </Line>
            </ToolButton>
            <ToolLine />
            <ToolButton $width={67} aria-label="Highlight">
              <Line size={24} stroke={1.8} box="0 0 24 26">
                <path d="M11 8l6-7 4 4-6 9-6 2zM9 16l-3 1 3-5M11 8l-2 5" />
                <path d="M2 23h20" stroke="#fbe7a8" strokeWidth="5" strokeLinecap="butt" />
              </Line>
            </ToolButton>
            <ToolLine $after={18} />
            <ToolButton $wide $on $width={115}>
              <Line size={21} stroke={1.7} box="0 0 20 21">
                <path d="M2 1h16v13l-6 6H2zM12 20v-6h6" stroke="#6a7380" />
              </Line>
              1 Sheet
            </ToolButton>
            <ToolButton $wide $on $width={142}>
              <Line size={21} stroke={1.7} box="0 0 20 21">
                <path d="M1 1h18v19H1zM1 6h18M7 6v14M13 6v14" stroke="#6a7380" />
              </Line>
              8 Columns
            </ToolButton>
            <ToolButton $wide $on $width={122}>
              <Line size={21} stroke={1.7} box="0 0 20 21">
                <path d="M1 1h18v3l-6 8v5l-5 3v-8L1 4z" stroke="#6a7380" />
              </Line>
              2 Filters
            </ToolButton>
            <ToolButton $wide $width={111}>
              <Line size={21} stroke={1.7} box="0 0 20 21">
                <path d="M9 1h10v19H9zM9 7h10M9 13h10M9 4H5v4M9 17H5v-4M5 8L1 10.500 5 13l3-2.500z" stroke="#6a6a6a" />
              </Line>
              Group
            </ToolButton>
            <ToolButton $wide $width={151}>
              <Line size={21} stroke={1.8} box="0 0 20 21">
                <path d="M17 1H3l9 9.500L3 20h14" stroke="#6a6a6a" />
              </Line>
              Summarize
            </ToolButton>
            <ToolButton $wide $width={90}>
              <SortArrows stroke={1.8} />
              Sort
            </ToolButton>
            <Spacer />
            <ToolButton $width={20} aria-label="Full screen">
              <Line size={20} stroke={1.7} box="0 0 20 20">
                <path d="M12 8l7-7M13 1h6v6M8 12l-7 7M7 19H1v-6" />
              </Line>
            </ToolButton>
          </Toolbar>
          <Body>
            <Grid />
            <Attachments />
            <SmartsheetRail />
          </Body>
        </Main>
      </Page>
      <WindowsTaskbar />
    </Screen>
  );
};

export default App;
